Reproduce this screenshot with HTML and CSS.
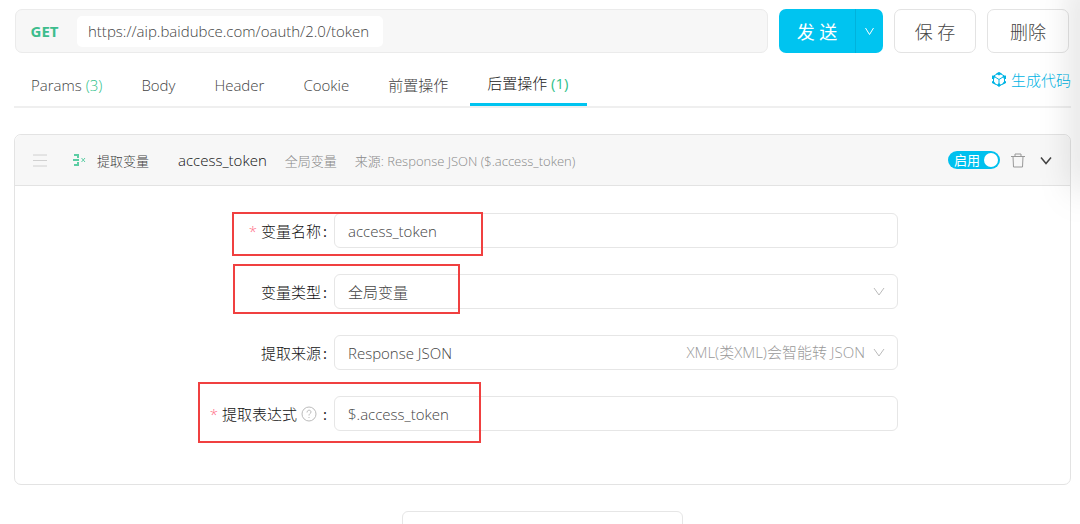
FILE: index.html
```html
<!DOCTYPE html>
<html lang="zh-CN">
  <head>
    <meta charset="UTF-8" />
    <title>access_token</title>
    <link rel="stylesheet" href="styles.css" />
  </head>
  <body>
    <form class="request-bar">
      <div class="url-box">
        <button class="method" type="button">GET</button>
        <input class="url" type="text" aria-label="URL" value="https://aip.baidubce.com/oauth/2.0/token" />
      </div>
      <div class="send-group">
        <button class="send" type="button">发 送</button>
        <button class="send-more" type="button" aria-label="发送选项">
          <svg width="11" height="9" viewBox="0 0 11 9"><path d="M1.500 1l4 6.500 4-6.500" /></svg>
        </button>
      </div>
      <button class="btn" type="button">保 存</button>
      <button class="btn" type="button">删除</button>
    </form>

    <nav class="tabs">
      <button class="tab" type="button">Params <span class="count">(3)</span></button>
      <button class="tab" type="button">Body</button>
      <button class="tab" type="button">Header</button>
      <button class="tab" type="button">Cookie</button>
      <button class="tab" type="button">前置操作</button>
      <button class="tab active" type="button">后置操作 <span class="count">(1)</span></button>
      <a class="code-link" href="#">
        <svg width="14" height="15" viewBox="0 0 14 15">
          <path class="line" d="M7 1l5.500 3v7L7 14l-5.500-3V4z M3 5l4 2.500L11 5 M7 7.500V13" />
          <path class="dot" d="M7 0l3 1.500L7 3.500 4 1.500z M0 3.500L3.500 4 2 7H0z M14 3.500L10.500 4 12 7h2z M0 9l2.500 1L4 13 0 11z M14 9l-2.500 1L10 13l4-2z M7 11l2 2-2 2-2-2z" />
        </svg>
        生成代码
      </a>
    </nav>

    <section class="card">
      <header class="card-header">
        <svg class="drag" width="14" height="13" viewBox="0 0 14 13"><path d="M0 1h14M0 6.500h14M0 12h14" /></svg>
        <svg class="extract" width="13" height="12" viewBox="0 0 13 12">
          <path d="M1 1h4v3M0 6h6M5 8v3H1" />
          <path class="thin" d="M8.500 4l3.500 4M12 4L8.500 8" />
        </svg>
        <span class="kind">提取变量</span>
        <span class="name">access_token</span>
        <span class="scope">全局变量</span>
        <span class="source">来源: Response JSON ($.access_token)</span>
        <label class="switch">
          <input type="checkbox" checked />
          <span class="switch-text">启用</span>
        </label>
        <button class="icon-btn trash" type="button" aria-label="删除">
          <svg width="14" height="15" viewBox="0 0 14 15"><path d="M0 3.500h14M4 3.500V1h6v2.500M2 3.500l.5 10.500h9L12 3.500" /></svg>
        </button>
        <button class="icon-btn fold" type="button" aria-label="收起">
          <svg width="12" height="9" viewBox="0 0 12 9"><path d="M1 1.500l5 6 5-6" /></svg>
        </button>
      </header>

      <form class="fields">
        <div class="row">
          <label for="varName"><i class="required">*</i>变量名称<b class="colon">:</b></label>
          <div class="control">
            <input id="varName" type="text" value="access_token" />
            <span class="mark mark-name"></span>
          </div>
        </div>
        <div class="row">
          <label for="varType">变量类型<b class="colon">:</b></label>
          <div class="control">
            <select id="varType">
              <option>全局变量</option>
            </select>
            <svg class="arrow" width="12" height="9" viewBox="0 0 12 9"><path d="M1 1l5 7 5-7" /></svg>
            <span class="mark mark-type"></span>
          </div>
        </div>
        <div class="row">
          <label for="varSource">提取来源<b class="colon">:</b></label>
          <div class="control">
            <select id="varSource">
              <option>Response JSON</option>
            </select>
            <span class="hint">XML(类XML)会智能转 JSON</span>
            <svg class="arrow" width="12" height="9" viewBox="0 0 12 9"><path d="M1 1l5 7 5-7" /></svg>
          </div>
        </div>
        <div class="row">
          <label for="varExpr"><i class="required">*</i>提取表达式
            <svg class="help" width="16" height="16" viewBox="0 0 16 16">
              <circle cx="8" cy="8" r="7" />
              <path d="M6 6.500c0-3 4-3 4-.5 0 1.500-2 1.500-2 3.500M8 11v1" />
            </svg>
            <b class="colon">:</b></label>
          <div class="control">
            <input id="varExpr" type="text" value="$.access_token" />
            <span class="mark mark-expr"></span>
          </div>
        </div>
      </form>
    </section>

    <button class="add" type="button"></button>
    <div class="edge-shadow"></div>
  </body>
</html>
```
FILE: styles.css
```css
* {
  box-sizing: border-box;
}

html {
  height: 100%;
  overflow: hidden;
}

body {
  margin: 0;
  padding: 9px 9px 0 14px;
  font-family: 'Open Sans', 'Noto Sans CJK SC', sans-serif;
  font-size: 15px;
  font-weight: 300;
  color: #444;
  background: #fff;
}

button,
input,
select {
  font: inherit;
  color: inherit;
  margin: 0;
}

button {
  padding: 0;
  border: none;
  background: none;
  cursor: pointer;
}

svg {
  display: block;
  fill: none;
  stroke: currentColor;
}

/* request bar */
.request-bar {
  display: flex;
  gap: 11px;
  height: 44px;
  padding: 0 2px 0 1px;
}

.url-box {
  flex: 1;
  display: flex;
  align-items: center;
  border: 1px solid #ebebeb;
  border-radius: 7px;
  background: #f7f7f7;
}

.method {
  width: 61px;
  padding-right: 4px;
  font-weight: bold;
  color: #3dbd8d;
}

.url {
  width: 306px;
  height: 31px;
  padding: 0 11px;
  border: none;
  border-radius: 5px;
  background: #fff;
}

.send-group {
  display: flex;
  width: 104px;
  border-radius: 7px;
  background: #00c4f0;
  color: #fff;
  font-size: 18px;
  font-weight: 400;
}

.send {
  flex: 1;
}

.send-more {
  display: flex;
  align-items: center;
  justify-content: center;
  width: 28px;
  border-left: 1px solid #00b2dc;
}

.btn {
  width: 82px;
  border: 1px solid #e3e3e3;
  border-radius: 7px;
  font-size: 18px;
  background: #fff;
}

/* tabs */
.tabs {
  display: flex;
  height: 55px;
  border-bottom: 2px solid #efefef;
}

.tab {
  padding: 10px 18px 0 17px;
  margin-right: 4px;
}

.tab.active {
  padding-top: 9px;
  border-bottom: 3px solid #00c4f0;
  color: #222;
}

.count {
  color: #2fbf8a;
}

.tab.active .count {
  font-weight: 400;
}

.code-link {
  display: flex;
  align-items: center;
  gap: 5px;
  margin-left: auto;
  color: #00b4e4;
  text-decoration: none;
}

.code-link .dot {
  fill: currentColor;
  stroke: none;
}

/* card */
.card {
  margin-top: 26px;
  border: 1px solid #e3e3e3;
  border-radius: 7px;
}

.card-header {
  display: flex;
  align-items: center;
  height: 51px;
  padding: 0 18px;
  border-bottom: 1px solid #e3e3e3;
  border-radius: 7px 7px 0 0;
  background: #f7f7f7;
  font-size: 13px;
}

.drag {
  color: #d0d0d0;
}

.extract {
  margin: 0 11px 0 26px;
  color: #5bcda3;
  stroke-width: 2;
}

.extract .thin {
  stroke-width: 1;
}

.name {
  margin: 0 18px 0 29px;
  font-size: 15px;
  color: #111;
}

.scope,
.source {
  color: #888;
}

.source {
  margin-left: 18px;
}

.switch {
  display: flex;
  position: relative;
  width: 52px;
  height: 18px;
  margin-left: auto;
}

.switch input {
  appearance: none;
  width: 100%;
  border-radius: 9px;
  background: #00c0ee;
}

.switch input::after {
  content: '';
  position: absolute;
  top: 2px;
  right: 2px;
  width: 14px;
  height: 14px;
  border-radius: 50%;
  background: #fff;
}

.switch-text {
  position: absolute;
  left: 6px;
  line-height: 18px;
  font-weight: 400;
  color: #fff;
}

.trash {
  margin: 0 15px 0 11px;
  color: #999;
}

.fold {
  color: #444;
  stroke-width: 1.5;
}

/* form */
.fields {
  display: grid;
  gap: 26px;
  padding: 27px 0 53px;
}

.row {
  display: grid;
  grid-template-columns: 319fr 564fr 172fr;
  align-items: center;
}

.row label {
  display: flex;
  align-items: center;
  justify-content: flex-end;
  padding-right: 7px;
  color: #111;
}

.required {
  margin-right: 4px;
  font-style: normal;
  color: #ff6f88;
}

.colon {
  margin-left: 2px;
  font-weight: 400;
}

.help {
  margin: 0 4px;
  color: #bbb;
}

.control {
  position: relative;
}

.control input,
.control select {
  display: block;
  appearance: none;
  width: 100%;
  height: 35px;
  padding: 0 13px;
  border: 1px solid #e6e6e6;
  border-radius: 6px;
  background: #fff;
  color: #444;
}

.arrow {
  position: absolute;
  top: 13px;
  right: 13px;
  color: #bbb;
}

.hint {
  position: absolute;
  right: 33px;
  top: 0;
  line-height: 35px;
  color: #999;
}

.mark {
  position: absolute;
  border: 2px solid #f04040;
  pointer-events: none;
}

.mark-name {
  top: -1px;
  left: -102px;
  width: 251px;
  height: 44px;
}

.mark-type {
  top: -10px;
  left: -101px;
  width: 227px;
  height: 50px;
}

.mark-expr {
  top: -14px;
  left: -136px;
  width: 283px;
  height: 61px;
}

.add {
  display: block;
  width: 281px;
  height: 36px;
  margin: 26px auto 0;
  border: 1px solid #e6e6e6;
  border-radius: 6px;
}

.edge-shadow {
  position: fixed;
  top: -20px;
  right: -10px;
  width: 10px;
  height: 210px;
  box-shadow: 0 0 36px rgba(0, 0, 0, 0.35);
  pointer-events: none;
}
```
